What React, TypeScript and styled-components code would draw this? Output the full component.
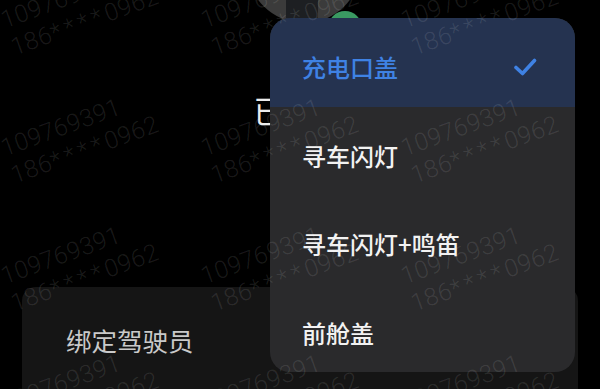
import React from "react";
import styled, { createGlobalStyle } from "styled-components";

const Global = createGlobalStyle`
  html, body { margin: 0; padding: 0; background: #000; }
  body { font-family: "Noto Sans CJK SC", "Noto Sans", sans-serif; }
`;

const Screen = styled.div`
  position: relative;
  width: 600px;
  height: 389px;
  overflow: hidden;
  background: #000;
  display: flex;
  flex-direction: column;
`;

const Avatar = styled.div`
  position: relative;
  flex-shrink: 0;
  width: 114px;
  height: 114px;
  margin: -91px 0 0 247px;
  border-radius: 50%;
  background: #3b3b3b;
`;

const AvatarMark = styled.div`
  position: absolute;
  left: 39px;
  top: 91px;
  width: 32px;
  height: 18px;
  background: #1d1f22;
`;

const StatusDot = styled.div`
  position: absolute;
  left: 81px;
  top: 102px;
  width: 34px;
  height: 34px;
  border-radius: 50%;
  background: #3a9a62;
`;

const Title = styled.div`
  margin-top: 68px;
  text-align: center;
  font-size: 31px;
  line-height: 37px;
  color: #ececec;
`;

const Card = styled.div`
  margin: auto 22px 0;
  height: 102px;
  flex-shrink: 0;
  background: #151515;
  border-radius: 14px 14px 0 0;
  padding: 38px 0 0 44px;
  box-sizing: border-box;
  font-size: 25.5px;
  line-height: 30px;
  color: #c9c9c9;
`;

const Menu = styled.div`
  position: absolute;
  top: 18px;
  left: 270px;
  width: 305px;
  border-radius: 20px;
  overflow: hidden;
  background: #2a2a2c;
  display: flex;
  flex-direction: column;
`;

const Item = styled.div<{ $active?: boolean }>`
  height: 88.5px;
  box-sizing: border-box;
  padding: 10px 38px 0 32px;
  display: flex;
  align-items: center;
  justify-content: space-between;
  background: ${(p) => (p.$active ? "#253350" : "transparent")};
  color: ${(p) => (p.$active ? "#3f82e4" : "#f2f2f2")};
  font-size: 24px;
  font-weight: 500;
  line-height: 30px;
`;

const Overlay = styled.div`
  position: absolute;
  inset: 0;
  pointer-events: none;
  overflow: hidden;
  z-index: 5;
`;

const MarkGrid = styled.div`
  display: grid;
  grid-template-columns: repeat(4, 200px);
  grid-auto-rows: 128px;
  margin: -121px 0 0 -3px;
`;

const MarkBlock = styled.div`
  transform: rotate(-20deg);
  transform-origin: 0 0;
  font-family: Roboto, "Noto Sans", sans-serif;
  font-weight: 300;
  font-size: 24.5px;
  line-height: 29px;
  white-space: nowrap;
  color: rgba(255, 255, 255, 0.1);
  letter-spacing: 0.3px;
`;

const Stars = styled.span`
  letter-spacing: 4px;
`;

const CheckIcon = () => (
  <svg width="24" height="18" viewBox="0 0 24 18" fill="none">
    <path
      d="M3 9.5 L9.5 15.5 L21.5 2.5"
      stroke="#3f82e4"
      strokeWidth="3.6"
      strokeLinecap="round"
      strokeLinejoin="round"
    />
  </svg>
);

const items = ["充电口盖", "寻车闪灯", "寻车闪灯+鸣笛", "前舱盖"];

export default function App() {
  const cells = Array.from({ length: 20 });
  return (
    <>
      <Global />
      <Screen>
        <Avatar>
          <AvatarMark />
          <StatusDot />
        </Avatar>
        <Title>已绑定</Title>
        <Card>绑定驾驶员</Card>
        <Menu>
          {items.map((t, i) => (
            <Item key={t} $active={i === 0}>
              <span>{t}</span>
              {i === 0 && <CheckIcon />}
            </Item>
          ))}
        </Menu>
        <Overlay>
          <MarkGrid>
            {cells.map((_, i) => (
              <div key={i}>
                <MarkBlock>
                  <div>109769391</div>
                  <div>
                    186<Stars>****</Stars>0962
                  </div>
                </MarkBlock>
              </div>
            ))}
          </MarkGrid>
        </Overlay>
      </Screen>
    </>
  );
}
